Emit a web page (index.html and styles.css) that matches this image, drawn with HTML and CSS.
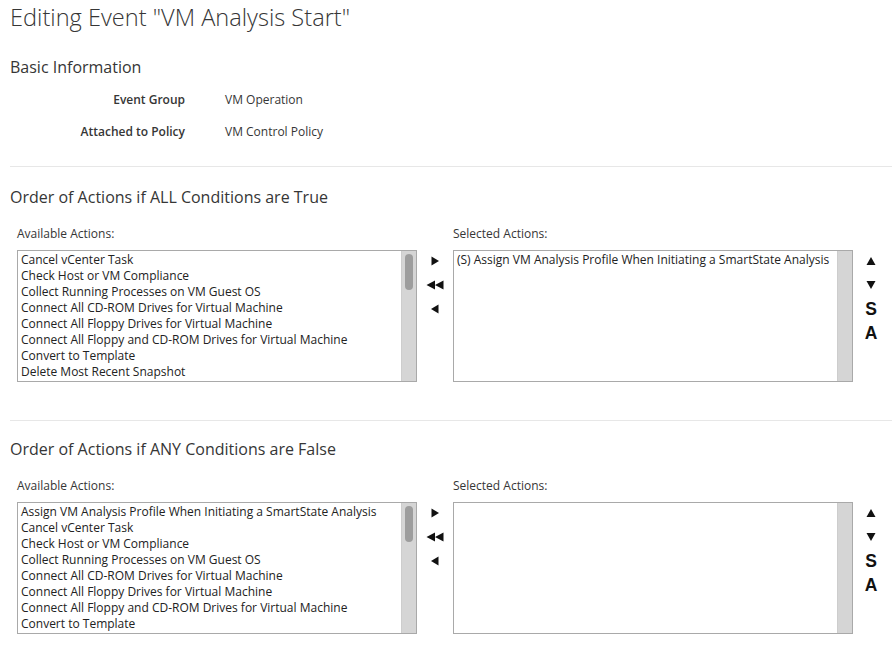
FILE: index.html
```html
<!DOCTYPE html>
<html>
<head>
<meta charset="utf-8">
<link rel="stylesheet" href="styles.css">
</head>
<body>
<div class="page">
  <h1 class="title">Editing Event "VM Analysis Start"</h1>

  <h2 class="section first">Basic Information</h2>
  <div class="info">
    <div class="info-label">Event Group</div>
    <div class="info-value">VM Operation</div>
    <div class="info-label">Attached to Policy</div>
    <div class="info-value">VM Control Policy</div>
  </div>

  <hr class="divider">

  <h2 class="section">Order of Actions if ALL Conditions are True</h2>
  <div class="chooser">
    <div class="col">
      <div class="col-label">Available Actions:</div>
      <div class="listbox">
        <div class="items">
          <div>Cancel vCenter Task</div>
          <div>Check Host or VM Compliance</div>
          <div>Collect Running Processes on VM Guest OS</div>
          <div>Connect All CD-ROM Drives for Virtual Machine</div>
          <div>Connect All Floppy Drives for Virtual Machine</div>
          <div>Connect All Floppy and CD-ROM Drives for Virtual Machine</div>
          <div>Convert to Template</div>
          <div>Delete Most Recent Snapshot</div>
        </div>
        <div class="track"><div class="thumb"></div></div>
      </div>
    </div>
    <div class="moves">
      <span class="btn"><svg width="10" height="10" viewBox="0 0 10 10"><path d="M1.5 0.5 L9 5 L1.5 9.5 Z" fill="#111"/></svg></span>
      <span class="btn"><svg width="18" height="10" viewBox="0 0 18 10"><path d="M9 0.5 L0.5 5 L9 9.5 Z M17.5 0.5 L9 5 L17.5 9.5 Z" fill="#111"/></svg></span>
      <span class="btn"><svg width="10" height="10" viewBox="0 0 10 10"><path d="M8.5 0.5 L1 5 L8.5 9.5 Z" fill="#111"/></svg></span>
    </div>
    <div class="col">
      <div class="col-label">Selected Actions:</div>
      <div class="listbox">
        <div class="items">
          <div>(S) Assign VM Analysis Profile When Initiating a SmartState Analysis</div>
        </div>
        <div class="track"></div>
      </div>
    </div>
    <div class="order">
      <span class="btn"><svg width="10" height="10" viewBox="0 0 10 10"><path d="M5 1 L9.5 9 L0.5 9 Z" fill="#111"/></svg></span>
      <span class="btn"><svg width="10" height="10" viewBox="0 0 10 10"><path d="M0.5 1 L9.5 1 L5 9 Z" fill="#111"/></svg></span>
      <span class="btn letter">S</span>
      <span class="btn letter">A</span>
    </div>
  </div>

  <hr class="divider second">

  <h2 class="section">Order of Actions if ANY Conditions are False</h2>
  <div class="chooser">
    <div class="col">
      <div class="col-label">Available Actions:</div>
      <div class="listbox">
        <div class="items">
          <div>Assign VM Analysis Profile When Initiating a SmartState Analysis</div>
          <div>Cancel vCenter Task</div>
          <div>Check Host or VM Compliance</div>
          <div>Collect Running Processes on VM Guest OS</div>
          <div>Connect All CD-ROM Drives for Virtual Machine</div>
          <div>Connect All Floppy Drives for Virtual Machine</div>
          <div>Connect All Floppy and CD-ROM Drives for Virtual Machine</div>
          <div>Convert to Template</div>
        </div>
        <div class="track"><div class="thumb"></div></div>
      </div>
    </div>
    <div class="moves">
      <span class="btn"><svg width="10" height="10" viewBox="0 0 10 10"><path d="M1.5 0.5 L9 5 L1.5 9.5 Z" fill="#111"/></svg></span>
      <span class="btn"><svg width="18" height="10" viewBox="0 0 18 10"><path d="M9 0.5 L0.5 5 L9 9.5 Z M17.5 0.5 L9 5 L17.5 9.5 Z" fill="#111"/></svg></span>
      <span class="btn"><svg width="10" height="10" viewBox="0 0 10 10"><path d="M8.5 0.5 L1 5 L8.5 9.5 Z" fill="#111"/></svg></span>
    </div>
    <div class="col">
      <div class="col-label">Selected Actions:</div>
      <div class="listbox">
        <div class="items"></div>
        <div class="track"></div>
      </div>
    </div>
    <div class="order">
      <span class="btn"><svg width="10" height="10" viewBox="0 0 10 10"><path d="M5 1 L9.5 9 L0.5 9 Z" fill="#111"/></svg></span>
      <span class="btn"><svg width="10" height="10" viewBox="0 0 10 10"><path d="M0.5 1 L9.5 1 L5 9 Z" fill="#111"/></svg></span>
      <span class="btn letter">S</span>
      <span class="btn letter">A</span>
    </div>
  </div>
</div>
</body>
</html>
```

FILE: styles.css
```css
html, body {
  margin: 0;
  padding: 0;
  background: #fff;
}
body {
  font-family: "Open Sans", "Noto Sans", sans-serif;
  color: #363636;
  font-size: 12px;
}
.page {
  padding: 0 0 0 10px;
}
.title {
  margin: 0;
  font-size: 23.6px;
  font-weight: 300;
  line-height: 34px;
  color: #363636;
}
.section {
  margin: 0;
  font-size: 16px;
  font-weight: 400;
  line-height: 22px;
  color: #363636;
}
.section.first {
  margin-top: 22px;
}
.info {
  display: grid;
  grid-template-columns: 175px auto;
  column-gap: 40px;
  grid-auto-rows: 32px;
  align-items: center;
  margin-top: 5px;
}
.info-label {
  text-align: right;
  font-weight: 600;
}
.divider {
  border: 0;
  border-top: 1px solid #e7e7e7;
  margin: 19px 1px 19px 0;
  height: 0;
}
.divider.second {
  margin-top: 38px;
  margin-bottom: 17px;
}
.chooser {
  display: flex;
  padding-left: 7px;
  margin-top: 18px;
}
.col {
  width: 400px;
}
.col-label {
  line-height: 16px;
  margin-bottom: 8px;
}
.listbox {
  box-sizing: border-box;
  height: 132px;
  border: 1px solid #a9a9a9;
  display: flex;
  overflow: hidden;
}
.items {
  flex: 1;
  padding: 1px 3px;
  line-height: 16px;
  white-space: nowrap;
  overflow: hidden;
  color: #222;
}
.track {
  width: 14px;
  background: #d5d5d5;
  border-left: 1px solid #cdcdcd;
  padding-top: 3px;
  display: flex;
  justify-content: center;
}
.thumb {
  width: 8px;
  height: 36px;
  border-radius: 4px;
  background: #9d9d9d;
}
.moves, .order {
  width: 36px;
  padding-top: 23px;
  display: flex;
  flex-direction: column;
  align-items: center;
}
.btn {
  height: 24px;
  display: flex;
  align-items: center;
  justify-content: center;
}
.btn svg {
  display: block;
}
.letter {
  font-family: "Liberation Sans", Arial, sans-serif;
  font-weight: 700;
  font-size: 17.5px;
  color: #111;
}
```
